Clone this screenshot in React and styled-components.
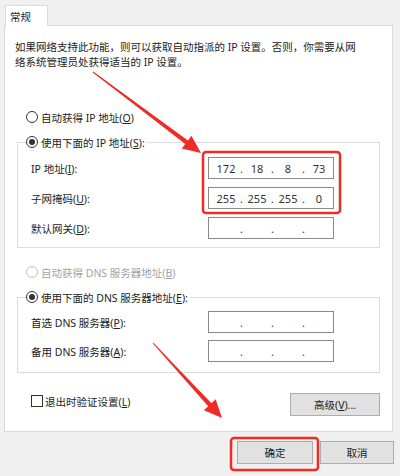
import styled, { createGlobalStyle } from "styled-components";

const GlobalStyle = createGlobalStyle`
    body {
        margin: 0;
        background: #f0f0f0;
        font-family: "Noto Sans", "Noto Sans CJK SC", sans-serif;
        font-size: 10.5px;
        color: #222;
    }
`;

const Window = styled.div`
    position: relative;
    width: 400px;
    height: 476px;
    box-sizing: border-box;
    padding: 5px 0 0 4px;
    background: #f0f0f0;
    overflow: hidden;
`;
const TabStrip = styled.div`
    display: flex;
    padding-left: 1px;
`;
const Tab = styled.div`
    position: relative;
    z-index: 1;
    width: 43px;
    height: 21px;
    box-sizing: border-box;
    margin-bottom: -1px;
    padding: 3px 0 0 4px;
    background: #fff;
    border: 1px solid #d9d9d9;
    border-bottom: none;
    line-height: 16px;
`;
const Panel = styled.div`
    width: 389px;
    box-sizing: border-box;
    padding: 14px 12px 15px 12px;
    background: #fff;
    border: 1px solid #d9d9d9;
`;
const Intro = styled.p`
    margin: 0 0 0 -2px;
    line-height: 15px;
    white-space: nowrap;
`;
const Mn = styled.span`
    text-decoration: underline;
`;
const Caption = styled.span`
    white-space: nowrap;
`;
const OptionRow = styled.label`
    display: flex;
    align-items: center;
    gap: 3px;
    height: 16px;
    margin: ${p => p.$top || 0}px 0 0 9px;
    color: ${p => (p.$disabled ? "#a3a3a3" : "inherit")};
`;
const RadioDot = styled.span`
    position: relative;
    width: 12px;
    height: 12px;
    box-sizing: border-box;
    border-radius: 50%;
    border: 1px solid ${p => (p.$disabled ? "#c4c4c4" : "#333")};
    background: #fff;
    &::after {
        content: "";
        display: ${p => (p.$checked ? "block" : "none")};
        position: absolute;
        left: 2px;
        top: 2px;
        width: 6px;
        height: 6px;
        border-radius: 50%;
        background: #333;
    }
`;
const Group = styled.fieldset`
    margin: 9px 0 0 0;
    padding: ${p => p.$pad};
    border: 1px solid #dcdcdc;
    min-width: 0;
`;
const Legend = styled.legend`
    display: flex;
    align-items: center;
    gap: 3px;
    height: 16px;
    margin-left: -5px;
    padding: 0 2px 0 0;
`;
const FieldGrid = styled.div`
    display: grid;
    grid-template-columns: 177px 126px;
    grid-auto-rows: 22px;
    row-gap: ${p => p.$gap}px;
    align-items: center;
`;
const FieldLabel = styled.span`
    white-space: nowrap;
`;
const IpBox = styled.div`
    display: flex;
    align-items: center;
    height: 22px;
    box-sizing: border-box;
    padding-left: 4px;
    background: #fff;
    border: 1px solid #8a8a8a;
    font-size: 11px;
    color: #333;
`;
const Octet = styled.span`
    width: 26px;
    text-align: center;
`;
const Dot = styled.span`
    width: 5px;
    text-align: center;
`;
const Footer = styled.div`
    display: flex;
    justify-content: space-between;
    align-items: flex-start;
    margin-top: 20px;
`;
const CheckRow = styled.label`
    display: flex;
    align-items: center;
    gap: 2px;
    height: 16px;
    margin: 0 0 0 14px;
`;
const CheckBox = styled.span`
    width: 12px;
    height: 12px;
    box-sizing: border-box;
    border: 1px solid #333;
    background: #fff;
`;
const Button = styled.button`
    width: ${p => p.$w}px;
    height: 23px;
    padding: 0;
    background: #e1e1e1;
    border: 1px solid #adadad;
    font-family: inherit;
    font-size: 10.5px;
    color: #222;
`;
const DialogButtons = styled.div`
    display: flex;
    justify-content: flex-end;
    gap: 7px;
    margin-top: 9px;
    padding-right: 6px;
`;
const Annotations = styled.svg`
    position: absolute;
    left: 0;
    top: 0;
    pointer-events: none;
`;

const RED = "#ee2b24";

const arrowPoints = (x1, y1, x2, y2, headLen = 18, headW = 16, w0 = 1, w1 = 4.5) => {
    const len = Math.hypot(x2 - x1, y2 - y1);
    const ux = (x2 - x1) / len;
    const uy = (y2 - y1) / len;
    const nx = -uy;
    const ny = ux;
    const bx = x2 - ux * headLen;
    const by = y2 - uy * headLen;
    const pt = (x, y, w) => `${x + nx * w / 2},${y + ny * w / 2}`;
    return [
        pt(x1, y1, w0), pt(bx, by, w1), pt(bx, by, headW), `${x2},${y2}`,
        pt(bx, by, -headW), pt(bx, by, -w1), pt(x1, y1, -w0),
    ].join(" ");
};

const Radio = ({ checked, disabled }) => <RadioDot $checked={checked} $disabled={disabled} />;

const IpField = ({ parts = ["", "", "", ""] }) => (
    <IpBox>
        <Octet>{parts[0]}</Octet><Dot>.</Dot>
        <Octet>{parts[1]}</Octet><Dot>.</Dot>
        <Octet>{parts[2]}</Octet><Dot>.</Dot>
        <Octet>{parts[3]}</Octet>
    </IpBox>
);

const App = () => {
    return (
        <Window>
            <GlobalStyle />
            <TabStrip><Tab>常规</Tab></TabStrip>
            <Panel>
                <Intro>
                    如果网络支持此功能，则可以获取自动指派的 IP 设置。否则，你需要从网<br />
                    络系统管理员处获得适当的 IP 设置。
                </Intro>

                <OptionRow $top={39}>
                    <Radio /><Caption>自动获得 IP 地址(<Mn>O</Mn>)</Caption>
                </OptionRow>
                <Group $pad="7px 0 8px 13px">
                    <Legend><Radio checked /><Caption>使用下面的 IP 地址(<Mn>S</Mn>):</Caption></Legend>
                    <FieldGrid $gap={8}>
                        <FieldLabel>IP 地址(<Mn>I</Mn>):</FieldLabel>
                        <IpField parts={["172", "18", "8", "73"]} />
                        <FieldLabel>子网掩码(<Mn>U</Mn>):</FieldLabel>
                        <IpField parts={["255", "255", "255", "0"]} />
                        <FieldLabel>默认网关(<Mn>D</Mn>):</FieldLabel>
                        <IpField />
                    </FieldGrid>
                </Group>

                <OptionRow $top={16} $disabled>
                    <Radio disabled /><Caption>自动获得 DNS 服务器地址(<Mn>B</Mn>)</Caption>
                </OptionRow>
                <Group $pad="6px 0 10px 13px">
                    <Legend><Radio checked /><Caption>使用下面的 DNS 服务器地址(<Mn>E</Mn>):</Caption></Legend>
                    <FieldGrid $gap={7}>
                        <FieldLabel>首选 DNS 服务器(<Mn>P</Mn>):</FieldLabel>
                        <IpField />
                        <FieldLabel>备用 DNS 服务器(<Mn>A</Mn>):</FieldLabel>
                        <IpField />
                    </FieldGrid>
                </Group>

                <Footer>
                    <CheckRow><CheckBox /><Caption>退出时验证设置(<Mn>L</Mn>)</Caption></CheckRow>
                    <Button $w={90}>高级(<Mn>V</Mn>)...</Button>
                </Footer>
            </Panel>
            <DialogButtons>
                <Button $w={76}>确定</Button>
                <Button $w={74}>取消</Button>
            </DialogButtons>

            <Annotations width="400" height="476" viewBox="0 0 400 476">
                <rect x="203" y="152" width="137" height="61" rx="3" fill="none" stroke={RED} strokeWidth="2.5" />
                <rect x="231" y="438" width="87" height="32" rx="3" fill="none" stroke={RED} strokeWidth="2.5" />
                <polygon points={arrowPoints(93, 72, 201, 153)} fill={RED} />
                <polygon points={arrowPoints(153, 343, 222, 418)} fill={RED} />
            </Annotations>
        </Window>
    );
};

export default App;
